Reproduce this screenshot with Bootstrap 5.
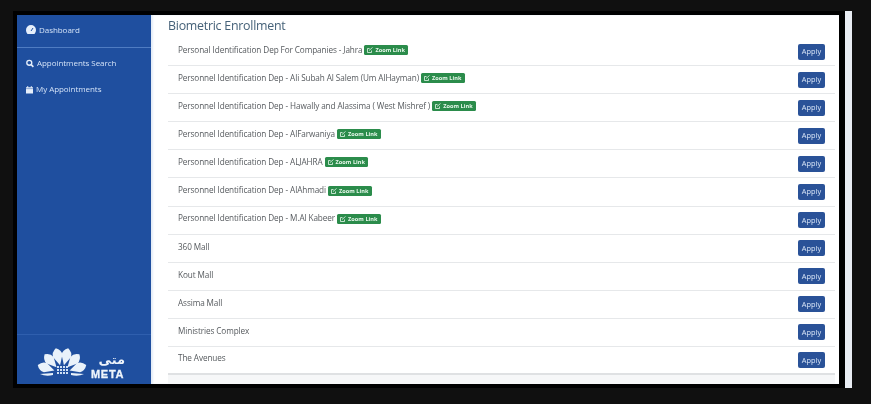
<!DOCTYPE html>
<html lang="en">
<head>
<meta charset="utf-8">
<title>Biometric Enrollment</title>
<link href="https://cdn.jsdelivr.net/npm/bootstrap@5.3.0/dist/css/bootstrap.min.css" rel="stylesheet">
<style>
html,body{height:404px;overflow:hidden}
body{background:#101010;font-family:"Open Sans","Liberation Sans",sans-serif;color:#555}
.stage{padding-top:11px;padding-left:13px;height:404px}
.bezel{width:832px;height:377px;background:#000;padding:4px 6px 4px 4px}
.edgebar{width:7px;height:377px;background:#e8ecf2}
.sidepane{width:134px;background:#1f4f9f;color:#d3e2f7;font-size:8px;font-weight:500;letter-spacing:-.05px}
.sidehead{height:33px;border-bottom:1.5px solid #4f7cc2;padding-left:9px;padding-bottom:3px;gap:3px}
.sidelink{padding-left:9px;height:26px;gap:3px}
.sidelink svg{flex:none}
.linkgap{height:2px}
.sidefoot{height:50px;border-top:1px solid #2f5fae;padding-top:12px;padding-left:19px}
.brandtext{line-height:1;color:#eef4fb;margin-left:3px;margin-top:7px;width:34px}
.brand-ar{font-family:"DejaVu Sans",sans-serif;font-size:13px;font-weight:700;height:16px;line-height:12px;text-align:right}
.brand-en{font-family:"Liberation Sans",sans-serif;font-size:11px;font-weight:700;letter-spacing:.7px;line-height:9px;-webkit-text-stroke:.3px #eef4fb}
.mainpane{background:#fff;padding-left:17px;padding-right:4px;box-shadow:inset 2px 0 2px #e4edf7}
.pagetitle{font-size:12.4px;letter-spacing:-.25px;font-weight:400;color:#456178;margin:0;height:23px;line-height:22px}
.enrollrow{height:28.1px;border-bottom:1px solid #e6e8ea;padding-left:10px;padding-right:10px;font-size:8.2px;letter-spacing:-.1px;color:#565a5e}
.rowlabel{padding-bottom:3px}
.zoomtag{background:#2b8c4b;color:#e8f8ec;font-size:5.6px;font-weight:700;border-radius:1.5px;padding:1px 3px;margin-left:2px;line-height:8px;letter-spacing:.05px;gap:2px}
.applybtn{background:#2a5298;color:#dbe7f8;border:0;width:27px;height:16px;font-size:7.4px;padding:0;border-radius:2px;font-family:inherit;letter-spacing:0}
.endrow{border-bottom:2px solid #dfe1e3}
.pagefoot{background:#f6f7f8;flex:1}
.softfocus{filter:blur(.35px)}
</style>
</head>
<body>
<div class="stage d-flex">
  <div class="bezel d-flex softfocus">
    <aside class="sidepane d-flex flex-column">
      <div class="sidehead d-flex align-items-center">
        <svg width="10" height="9" viewBox="0 0 10 9"><path fill="#e6effb" d="M5 0a5 5 0 0 0-5 5c0 1.500.6 2.900 1.500 4h7A5.800 5.800 0 0 0 10 5a5 5 0 0 0-5-5z"/><path stroke="#1f4f9f" stroke-width="1" d="M5 6l2-3"/></svg>
        <span>Dashboard</span>
      </div>
      <div class="linkgap"></div>
      <div class="sidelink d-flex align-items-center">
        <svg width="8" height="9" viewBox="0 0 9 9"><circle cx="3.700" cy="3.700" r="2.800" fill="none" stroke="#e6effb" stroke-width="1.500"/><path d="M5.800 5.800L8.300 8.300" stroke="#e6effb" stroke-width="1.800"/></svg>
        <span>Appointments Search</span>
      </div>
      <div class="sidelink d-flex align-items-center">
        <svg width="7" height="9" viewBox="0 0 8 9"><path fill="#e6effb" d="M0 2h1.500V.5h1V2h3V.5h1V2H8v7H0z"/><path stroke="#1f4f9f" stroke-width=".5" d="M0 3.500h8"/></svg>
        <span>My Appointments</span>
      </div>
      <div class="sidefoot mt-auto d-flex align-items-start">
        <svg width="52" height="30" viewBox="0 0 52 30">
          <defs><path id="fanpetal" d="M0-8L-4.800-17.500Q-5.200-22.500 0-25.500Q5.200-22.500 4.800-17.500z"/></defs>
          <g fill="#e9f2fa" transform="translate(26 26)">
            <use href="#fanpetal" transform="rotate(-14)"/>
            <use href="#fanpetal" transform="rotate(14)"/>
            <use href="#fanpetal" transform="rotate(-43)"/>
            <use href="#fanpetal" transform="rotate(43)"/>
            <use href="#fanpetal" transform="rotate(-72)"/>
            <use href="#fanpetal" transform="rotate(72)"/>
            <path d="M-9 0L-22 1Q-16 4-9 2z"/>
            <path d="M9 0L22 1Q16 4 9 2z"/>
            <g transform="translate(-5 -7)" fill="#cfe0f5">
              <rect width="2" height="2"/><rect x="3" width="2" height="2"/><rect x="6" width="2" height="2"/><rect x="9" width="2" height="2"/>
              <rect y="3" width="2" height="2"/><rect x="3" y="3" width="2" height="2"/><rect x="6" y="3" width="2" height="2"/><rect x="9" y="3" width="2" height="2"/>
              <rect y="6" width="2" height="2"/><rect x="3" y="6" width="2" height="2"/><rect x="6" y="6" width="2" height="2"/><rect x="9" y="6" width="2" height="2"/>
            </g>
          </g>
        </svg>
        <div class="brandtext">
          <div class="brand-ar">متى</div>
          <div class="brand-en">META</div>
        </div>
      </div>
    </aside>
    <main class="mainpane flex-grow-1 d-flex flex-column">
      <h1 class="pagetitle">Biometric Enrollment</h1>
      <div class="enrollrow d-flex align-items-center justify-content-between"><div class="rowlabel d-flex align-items-center"><span>Personal Identification Dep For Companies - Jahra</span><span class="zoomtag d-flex align-items-center"><svg width="6" height="6" viewBox="0 0 6 6"><path fill="none" stroke="#e8f8ec" stroke-width=".8" d="M4.500 3.500V5.500H.5V1.500H2.500M2 3.500L5.500.5"/></svg>Zoom Link</span></div><button class="applybtn">Apply</button></div>
      <div class="enrollrow d-flex align-items-center justify-content-between"><div class="rowlabel d-flex align-items-center"><span>Personnel Identification Dep - Ali Subah Al Salem (Um AlHayman)</span><span class="zoomtag d-flex align-items-center"><svg width="6" height="6" viewBox="0 0 6 6"><path fill="none" stroke="#e8f8ec" stroke-width=".8" d="M4.500 3.500V5.500H.5V1.500H2.500M2 3.500L5.500.5"/></svg>Zoom Link</span></div><button class="applybtn">Apply</button></div>
      <div class="enrollrow d-flex align-items-center justify-content-between"><div class="rowlabel d-flex align-items-center"><span>Personnel Identification Dep - Hawally and Alassima ( West Mishref )</span><span class="zoomtag d-flex align-items-center"><svg width="6" height="6" viewBox="0 0 6 6"><path fill="none" stroke="#e8f8ec" stroke-width=".8" d="M4.500 3.500V5.500H.5V1.500H2.500M2 3.500L5.500.5"/></svg>Zoom Link</span></div><button class="applybtn">Apply</button></div>
      <div class="enrollrow d-flex align-items-center justify-content-between"><div class="rowlabel d-flex align-items-center"><span>Personnel Identification Dep - AlFarwaniya</span><span class="zoomtag d-flex align-items-center"><svg width="6" height="6" viewBox="0 0 6 6"><path fill="none" stroke="#e8f8ec" stroke-width=".8" d="M4.500 3.500V5.500H.5V1.500H2.500M2 3.500L5.500.5"/></svg>Zoom Link</span></div><button class="applybtn">Apply</button></div>
      <div class="enrollrow d-flex align-items-center justify-content-between"><div class="rowlabel d-flex align-items-center"><span>Personnel Identification Dep - ALJAHRA</span><span class="zoomtag d-flex align-items-center"><svg width="6" height="6" viewBox="0 0 6 6"><path fill="none" stroke="#e8f8ec" stroke-width=".8" d="M4.500 3.500V5.500H.5V1.500H2.500M2 3.500L5.500.5"/></svg>Zoom Link</span></div><button class="applybtn">Apply</button></div>
      <div class="enrollrow d-flex align-items-center justify-content-between"><div class="rowlabel d-flex align-items-center"><span>Personnel Identification Dep - AlAhmadi</span><span class="zoomtag d-flex align-items-center"><svg width="6" height="6" viewBox="0 0 6 6"><path fill="none" stroke="#e8f8ec" stroke-width=".8" d="M4.500 3.500V5.500H.5V1.500H2.500M2 3.500L5.500.5"/></svg>Zoom Link</span></div><button class="applybtn">Apply</button></div>
      <div class="enrollrow d-flex align-items-center justify-content-between"><div class="rowlabel d-flex align-items-center"><span>Personnel Identification Dep - M.Al Kabeer</span><span class="zoomtag d-flex align-items-center"><svg width="6" height="6" viewBox="0 0 6 6"><path fill="none" stroke="#e8f8ec" stroke-width=".8" d="M4.500 3.500V5.500H.5V1.500H2.500M2 3.500L5.500.5"/></svg>Zoom Link</span></div><button class="applybtn">Apply</button></div>
      <div class="enrollrow d-flex align-items-center justify-content-between"><span class="rowlabel">360 Mall</span><button class="applybtn">Apply</button></div>
      <div class="enrollrow d-flex align-items-center justify-content-between"><span class="rowlabel">Kout Mall</span><button class="applybtn">Apply</button></div>
      <div class="enrollrow d-flex align-items-center justify-content-between"><span class="rowlabel">Assima Mall</span><button class="applybtn">Apply</button></div>
      <div class="enrollrow d-flex align-items-center justify-content-between"><span class="rowlabel">Ministries Complex</span><button class="applybtn">Apply</button></div>
      <div class="enrollrow d-flex align-items-center justify-content-between endrow"><span class="rowlabel">The Avenues</span><button class="applybtn">Apply</button></div>
      <div class="pagefoot"></div>
    </main>
  </div>
  <div class="edgebar"></div>
</div>
</body>
</html>
